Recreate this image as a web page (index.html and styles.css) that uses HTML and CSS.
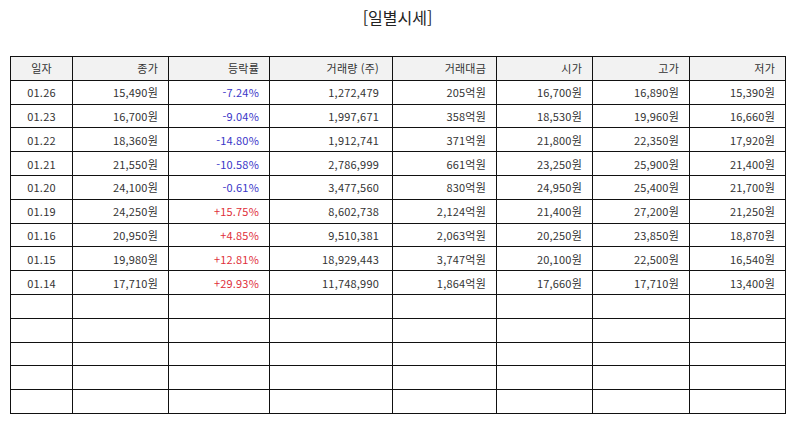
FILE: index.html
```html
<!DOCTYPE html>
<html lang="ko">
<head>
<meta charset="utf-8">
<title>일별시세</title>
<link rel="stylesheet" href="styles.css">
</head>
<body>
<div class="page">
  <h1 class="title">[일별시세]</h1>
  <table class="quotes">
    <colgroup>
      <col class="c-date"><col class="c-close"><col class="c-rate"><col class="c-vol"><col class="c-amt"><col class="c-open"><col class="c-high"><col class="c-low">
    </colgroup>
    <thead>
      <tr><th class="center">일자</th><th>종가</th><th>등락률</th><th class="vol">거래량 (주)</th><th>거래대금</th><th>시가</th><th>고가</th><th>저가</th></tr>
    </thead>
    <tbody>
      <tr><td class="center">01.26</td><td>15,490원</td><td class="down">-7.24%</td><td class="vol">1,272,479</td><td>205억원</td><td>16,700원</td><td>16,890원</td><td>15,390원</td></tr>
      <tr><td class="center">01.23</td><td>16,700원</td><td class="down">-9.04%</td><td class="vol">1,997,671</td><td>358억원</td><td>18,530원</td><td>19,960원</td><td>16,660원</td></tr>
      <tr><td class="center">01.22</td><td>18,360원</td><td class="down">-14.80%</td><td class="vol">1,912,741</td><td>371억원</td><td>21,800원</td><td>22,350원</td><td>17,920원</td></tr>
      <tr><td class="center">01.21</td><td>21,550원</td><td class="down">-10.58%</td><td class="vol">2,786,999</td><td>661억원</td><td>23,250원</td><td>25,900원</td><td>21,400원</td></tr>
      <tr><td class="center">01.20</td><td>24,100원</td><td class="down">-0.61%</td><td class="vol">3,477,560</td><td>830억원</td><td>24,950원</td><td>25,400원</td><td>21,700원</td></tr>
      <tr><td class="center">01.19</td><td>24,250원</td><td class="up">+15.75%</td><td class="vol">8,602,738</td><td>2,124억원</td><td>21,400원</td><td>27,200원</td><td>21,250원</td></tr>
      <tr><td class="center">01.16</td><td>20,950원</td><td class="up">+4.85%</td><td class="vol">9,510,381</td><td>2,063억원</td><td>20,250원</td><td>23,850원</td><td>18,870원</td></tr>
      <tr><td class="center">01.15</td><td>19,980원</td><td class="up">+12.81%</td><td class="vol">18,929,443</td><td>3,747억원</td><td>20,100원</td><td>22,500원</td><td>16,540원</td></tr>
      <tr><td class="center">01.14</td><td>17,710원</td><td class="up">+29.93%</td><td class="vol">11,748,990</td><td>1,864억원</td><td>17,660원</td><td>17,710원</td><td>13,400원</td></tr>
      <tr><td></td><td></td><td></td><td></td><td></td><td></td><td></td><td></td></tr>
      <tr><td></td><td></td><td></td><td></td><td></td><td></td><td></td><td></td></tr>
      <tr><td></td><td></td><td></td><td></td><td></td><td></td><td></td><td></td></tr>
      <tr><td></td><td></td><td></td><td></td><td></td><td></td><td></td><td></td></tr>
      <tr><td></td><td></td><td></td><td></td><td></td><td></td><td></td><td></td></tr>
    </tbody>
  </table>
</div>
</body>
</html>
```
FILE: styles.css
```css
html, body {
  margin: 0;
  padding: 0;
  background: #ffffff;
}
body {
  font-family: "Noto Sans CJK KR", "Noto Sans", sans-serif;
  color: #333333;
}
.page {
  padding: 0 9px 0 10px;
}
.title {
  margin: 0;
  height: 56px;
  padding-top: 5px;
  box-sizing: border-box;
  text-align: center;
  font-size: 16px;
  font-weight: normal;
  line-height: 24px;
  color: #222222;
}
.quotes {
  width: 775px;
  border-collapse: collapse;
  table-layout: fixed;
  font-size: 11px;
}
.c-date { width: 62px; }
.c-close { width: 96px; }
.c-rate { width: 101px; }
.c-vol { width: 123px; }
.c-amt { width: 104px; }
.c-open { width: 96px; }
.c-high { width: 97px; }
.c-low { width: 96px; }
.quotes th,
.quotes td {
  border: 1px solid #111111;
  height: 22.8px;
  padding: 0 10px;
  text-align: right;
  font-weight: normal;
  white-space: nowrap;
  line-height: 14px;
  letter-spacing: 0.2px;
}
.quotes th {
  background: #f2f2f2;
  color: #333333;
}
.quotes .center {
  text-align: center;
}
.quotes .vol {
  padding-right: 13px;
}
.down {
  color: #3a36c8;
}
.up {
  color: #e0303a;
}
```
